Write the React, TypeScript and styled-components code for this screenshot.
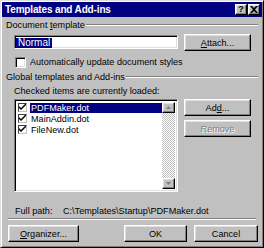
import styled, { createGlobalStyle } from "styled-components";

const GlobalStyle = createGlobalStyle`
  html, body {
    margin: 0;
    padding: 0;
    background: #c0c0c0;
  }
  * {
    box-sizing: border-box;
  }
`;

const raised = `
  border: 1px solid;
  border-color: #ffffff #000000 #000000 #ffffff;
  box-shadow: inset -1px -1px #808080, inset 1px 1px #dfdfdf;
`;

const sunken = `
  border: 1px solid;
  border-color: #808080 #ffffff #ffffff #808080;
  box-shadow: inset 1px 1px #000000, inset -1px -1px #dfdfdf;
`;

const CheckIcon = () => (
  <svg width="7" height="7" viewBox="0 0 7 7">
    <path d="M0 2 L0 4 L2 6 L7 1 L7 -1 L2 4 Z" fill="#000" />
  </svg>
);

const files = ["PDFMaker.dot", "MainAddin.dot", "FileNew.dot"];

export default function App() {
  return (
    <>
      <GlobalStyle />
      <Window>
        <TitleBar>
          <TitleText>Templates and Add-ins</TitleText>
          <CaptionButtons>
            <CaptionButton>?</CaptionButton>
            <CaptionButton>
              <svg width="8" height="7" viewBox="0 0 8 7">
                <path d="M0 0 L2 0 L4 2 L6 0 L8 0 L5 3.5 L8 7 L6 7 L4 5 L2 7 L0 7 L3 3.5 Z" fill="#000" />
              </svg>
            </CaptionButton>
          </CaptionButtons>
        </TitleBar>

        <Content>
          <SectionHeader>
            <span>
              Document <u>t</u>emplate
            </span>
            <Groove />
          </SectionHeader>

          <TemplateRow>
            <TextBox>
              <Selected>Normal</Selected>
            </TextBox>
            <Button $width={67}>
              <u>A</u>ttach...
            </Button>
          </TemplateRow>

          <CheckRow>
            <CheckBox />
            <span>Automatically update document styles</span>
          </CheckRow>

          <SectionHeader $top={3}>
            <span>Global templates and Add-ins</span>
            <Groove />
          </SectionHeader>

          <Caption>Checked items are currently loaded:</Caption>

          <ListRow>
            <ListBox>
              <Items>
                {files.map((f, i) => (
                  <Item key={f}>
                    <SmallCheck>
                      <CheckIcon />
                    </SmallCheck>
                    <ItemText $selected={i === 0}>{f}</ItemText>
                  </Item>
                ))}
              </Items>
              <ScrollBar>
                <ArrowButton>
                  <svg width="5" height="3" viewBox="0 0 5 3">
                    <path d="M2.5 0 L5 3 L0 3 Z" fill="#808080" />
                  </svg>
                </ArrowButton>
                <Track />
                <ArrowButton>
                  <svg width="5" height="3" viewBox="0 0 5 3">
                    <path d="M0 0 L5 0 L2.5 3 Z" fill="#808080" />
                  </svg>
                </ArrowButton>
              </ScrollBar>
            </ListBox>
            <SideButtons>
              <Button $width={67}>
                Ad<u>d</u> ...
              </Button>
              <Button $width={67} $disabled>
                Remove
              </Button>
            </SideButtons>
          </ListRow>

          <PathRow>
            <PathLabel>Full path:</PathLabel>
            <span>C:\Templates\Startup\PDFMaker.dot</span>
          </PathRow>

          <Separator />

          <BottomRow>
            <Button $width={71}>
              <u>O</u>rganizer...
            </Button>
            <Spacer />
            <Button $width={63}>OK</Button>
            <Button $width={64}>Cancel</Button>
          </BottomRow>
        </Content>
      </Window>
    </>
  );
}

const Window = styled.div`
  width: 264px;
  height: 248px;
  background: #c0c0c0;
  border: 1px solid;
  border-color: #dfdfdf #000000 #000000 #dfdfdf;
  box-shadow: inset 1px 1px #ffffff, inset -1px -1px #808080;
  padding: 1px;
  display: flex;
  flex-direction: column;
  font-family: "Liberation Sans", Arial, sans-serif;
  font-size: 9.1px;
  color: #000;
`;

const TitleBar = styled.div`
  height: 15px;
  background: #000080;
  display: flex;
  align-items: center;
  justify-content: space-between;
  padding: 0 2px 0 3px;
`;

const TitleText = styled.div`
  color: #ffffff;
  font-weight: bold;
  font-size: 10px;
  letter-spacing: -0.15px;
`;

const CaptionButtons = styled.div`
  display: flex;
  gap: 1px;
`;

const CaptionButton = styled.div`
  width: 12px;
  height: 11px;
  background: #c0c0c0;
  ${raised}
  display: flex;
  align-items: center;
  justify-content: center;
  font-weight: bold;
  font-size: 9px;
  line-height: 1;
  color: #000;
`;

const Content = styled.div`
  flex: 1;
  display: flex;
  flex-direction: column;
  padding: 0 4px 0 4px;
`;

const SectionHeader = styled.div<{ $top?: number }>`
  display: flex;
  align-items: center;
  height: 12px;
  line-height: 12px;
  margin-top: ${({ $top }) => $top ?? 2}px;
  white-space: nowrap;
`;

const Groove = styled.div`
  flex: 1;
  height: 2px;
  margin-left: 1px;
  border-top: 1px solid #808080;
  border-bottom: 1px solid #ffffff;
`;

const TemplateRow = styled.div`
  display: flex;
  align-items: flex-start;
  margin: 3px 0 0 8px;
  gap: 6px;
`;

const TextBox = styled.div`
  width: 164px;
  height: 14px;
  margin-top: 1px;
  background: #ffffff;
  ${sunken}
  padding: 2px 0 0 1px;
  display: flex;
  align-items: flex-start;
`;

const Selected = styled.span`
  background: #000080;
  color: #ffffff;
  font-size: 10px;
  line-height: 10px;
  height: 10px;
  padding: 0 2px 0 2px;
`;

const Button = styled.div<{ $width: number; $disabled?: boolean }>`
  width: ${({ $width }) => $width}px;
  height: 17px;
  background: #c0c0c0;
  ${raised}
  display: flex;
  align-items: center;
  justify-content: center;
  white-space: nowrap;
  color: ${({ $disabled }) => ($disabled ? "#808080" : "#000")};
  text-shadow: ${({ $disabled }) => ($disabled ? "1px 1px #ffffff" : "none")};
`;

const CheckRow = styled.div`
  display: flex;
  align-items: center;
  margin: 5px 0 0 9px;
  height: 12px;
  gap: 4px;
  white-space: nowrap;
`;

const CheckBox = styled.div`
  width: 11px;
  height: 11px;
  background: #ffffff;
  ${sunken}
`;

const Caption = styled.div`
  margin: 2px 0 0 8px;
  height: 12px;
  line-height: 12px;
  white-space: nowrap;
`;

const ListRow = styled.div`
  display: flex;
  align-items: flex-start;
  margin: 2px 0 0 8px;
  gap: 6px;
`;

const ListBox = styled.div`
  width: 164px;
  height: 93px;
  background: #ffffff;
  ${sunken}
  padding: 2px;
  display: flex;
`;

const Items = styled.div`
  flex: 1;
  display: flex;
  flex-direction: column;
`;

const Item = styled.div`
  display: flex;
  align-items: center;
  height: 11px;
  white-space: nowrap;
`;

const SmallCheck = styled.div`
  width: 9px;
  height: 9px;
  margin-left: 1px;
  margin-right: 3px;
  background: #ffffff;
  border: 1px solid;
  border-color: #404040 #c0c0c0 #c0c0c0 #404040;
  display: flex;
  align-items: center;
  justify-content: center;
`;

const ItemText = styled.div<{ $selected?: boolean }>`
  flex: 1;
  height: 10px;
  line-height: 10px;
  padding-left: 1px;
  background: ${({ $selected }) => ($selected ? "#000080" : "transparent")};
  color: ${({ $selected }) => ($selected ? "#ffffff" : "#000")};
`;

const ScrollBar = styled.div`
  width: 13px;
  display: flex;
  flex-direction: column;
`;

const ArrowButton = styled.div`
  height: 11px;
  background: #c0c0c0;
  ${raised}
  display: flex;
  align-items: center;
  justify-content: center;
`;

const Track = styled.div`
  flex: 1;
  background-color: #e0e0e0;
  background-image: repeating-conic-gradient(#c0c0c0 0 25%, #ffffff 0 50%);
  background-size: 2px 2px;
`;

const SideButtons = styled.div`
  display: flex;
  flex-direction: column;
  gap: 4px;
`;

const PathRow = styled.div`
  display: flex;
  margin: 14px 0 0 9px;
  height: 11px;
  line-height: 11px;
  white-space: nowrap;
`;

const PathLabel = styled.span`
  width: 48px;
`;

const Separator = styled.div`
  height: 2px;
  margin: 1px 2px 0 2px;
  border-top: 1px solid #808080;
  border-bottom: 1px solid #ffffff;
`;

const BottomRow = styled.div`
  display: flex;
  align-items: center;
  margin: 5px 0 0 2px;
  gap: 7px;
`;

const Spacer = styled.div`
  flex: 1;
`;
